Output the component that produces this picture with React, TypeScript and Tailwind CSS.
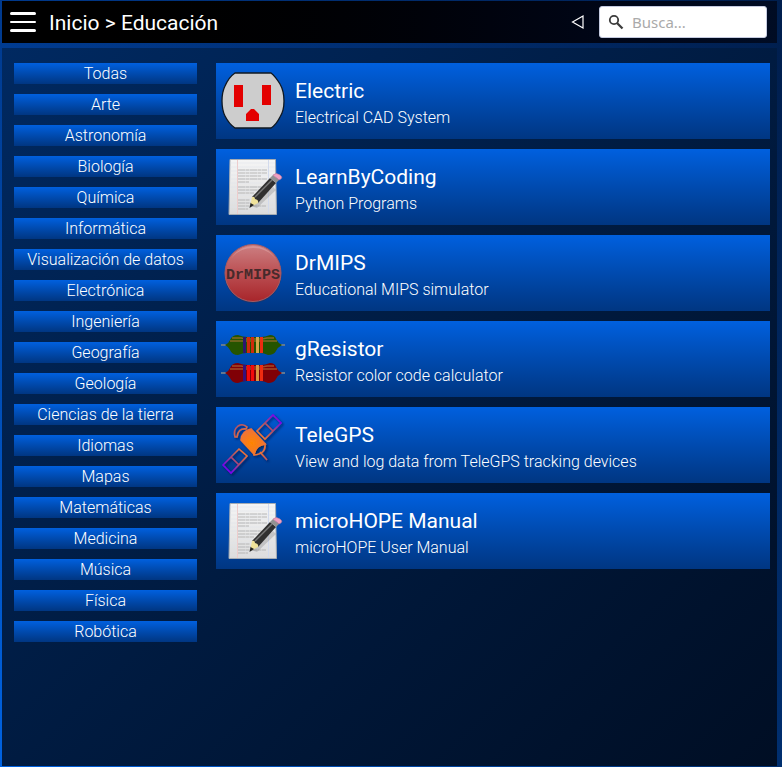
import React from 'react';

const categories = [
  'Todas', 'Arte', 'Astronomía', 'Biología', 'Química', 'Informática',
  'Visualización de datos', 'Electrónica', 'Ingeniería', 'Geografía',
  'Geología', 'Ciencias de la tierra', 'Idiomas', 'Mapas', 'Matemáticas',
  'Medicina', 'Música', 'Física', 'Robótica',
];

function OutletIcon() {
  return (
    <svg viewBox="0 0 64 64" className="size-16" aria-hidden="true">
      <path d="M14 4H50Q54 7 59 15Q63 22 63 32T59 48Q55 56 50 59H14Q8 55 4 47Q1 41 1 32T4 17Q8 8 14 4Z" fill="#cdcdcd" stroke="#101820" strokeWidth="1.300" />
      <path d="M13 16h9v22h-9zM41 16h9v20h-9zM25 52V45l5-5h3l5 5v7z" fill="#e30000" />
    </svg>
  );
}

function DocumentIcon({ id }: { id: string }) {
  return (
    <svg viewBox="1 1 64 64" className="size-16" aria-hidden="true">
      <defs>
        <linearGradient id={id} x1="0" y1="0" x2="0" y2="1">
          <stop offset="0" stopColor="#f5f5f5" />
          <stop offset="1" stopColor="#dcdcdc" />
        </linearGradient>
      </defs>
      <path d="M10 5.500H55.500L56.500 60.500H9Z" fill={`url(#${id})`} stroke="#a5acb4" />
      <path d="M10 9H55M10 13H55M10 17H55M10 21H55M10 25H55M10 29H55M10 33H55M10 37H55M10 41H55M10 45H55M10 49H55M10 53H55M10 57H55" stroke="#dce1eb" strokeWidth=".500" />
      <path d="M17.500 6V60" stroke="#edcccc" />
      <path d="M48.500 6V60" stroke="#d2daec" />
      <path d="M18 16H47M18 19H47M18 22H41M18 25H47M18 28H29M18 33H42M18 36H40M18 39H34M18 46H30M18 49H34M18 52H46M18 55H28" stroke="#b5b5b5" strokeWidth="1.200" strokeDasharray="7 .5 4 .5" />
      <path d="M31 52L53 33L56 36L37 54Z" fill="#777" opacity=".3" />
      <path d="M32 43L50 24L56 29L38 49Z" fill="#303030" />
      <path d="M35 43L52 26" stroke="#777" strokeWidth="1.500" />
      <path d="M50 24L53 21L59 26L56 29Z" fill="#929292" />
      <path d="M53 21Q56 18 60 21T59 26Z" fill="#efa0c2" stroke="#bd7899" strokeWidth=".600" />
      <path d="M32 43Q35 42 35 45Q39 46 38 49L30 53Z" fill="#efe29a" />
      <path d="M30.500 49L34 51L29.500 54Z" fill="#222" />
    </svg>
  );
}

function MipsIcon() {
  return (
    <svg viewBox="0 0 64 64" className="size-16" aria-hidden="true">
      <defs>
        <linearGradient id="mips" x1="0" y1="0" x2="0" y2="1">
          <stop offset="0" stopColor="#cc8083" />
          <stop offset=".450" stopColor="#bd5457" />
          <stop offset="1" stopColor="#a8252a" />
        </linearGradient>
      </defs>
      <ellipse cx="32" cy="33" rx="28.500" ry="29" fill="#30344f" opacity=".5" />
      <ellipse cx="32" cy="32" rx="28" ry="28.500" fill="url(#mips)" stroke="#a85b62" />
      <path d="M10 18Q18 5 32 5T55 18Q46 7 32 7T10 18Z" fill="#e0a9aa" opacity=".5" />
      <text x="32" y="38" textAnchor="middle" fontFamily="Liberation Mono, monospace" fontSize="15" fontWeight="700" fill="#472a2b">DrMIPS</text>
    </svg>
  );
}

function Resistor({ y, body, bands }: { y: number; body: string; bands: string[] }) {
  return (
    <g transform={`translate(0 ${y})`}>
      <path d="M0 10H64" stroke="#617994" strokeWidth="2" />
      <path d="M4 10Q8 8 9 5Q11 0 17 0Q22 2 26 2H40Q44 2 49 0Q54 0 55 4Q57 8 61 10Q57 12 55 16Q53 20 47 20Q43 18 39 18H25Q22 18 17 20Q11 20 9 15Q8 12 4 10Z" fill={body} />
      <path d="M11 3H20L25 4H41L46 3H53M9 6H56" fill="none" stroke="#b77738" strokeWidth="1.500" opacity=".65" />
      <path d="M23.500 2V18" stroke={bands[0]} strokeWidth="3" />
      <path d="M27.500 2V18M31.500 2V18" stroke={bands[1]} strokeWidth="3" />
      <path d="M36.500 2V18" stroke={bands[2]} strokeWidth="3" />
      <path d="M40.500 2V18" stroke="#f02c10" strokeWidth="3" />
    </g>
  );
}

function ResistorIcon() {
  return (
    <svg viewBox="0 0 64 64" className="size-16" aria-hidden="true">
      <Resistor y={8} body="#255400" bands={['#2b176f', '#cf2b0c', '#d3a849']} />
      <Resistor y={36} body="#800006" bands={['#35107b', '#f40b0b', '#dc953f']} />
    </svg>
  );
}

function SatelliteIcon() {
  return (
    <svg viewBox="0 0 64 64" className="size-16" aria-hidden="true">
      <defs>
        <radialGradient id="satellite" gradientUnits="userSpaceOnUse" cx="31" cy="30" r="36">
          <stop offset="0" stopColor="#ff8500" />
          <stop offset=".350" stopColor="#ef7336" />
          <stop offset=".650" stopColor="#b65165" />
          <stop offset="1" stopColor="#7a00ed" />
        </radialGradient>
        <filter id="satelliteShadow" x="-20%" y="-20%" width="150%" height="150%">
          <feDropShadow dx="1.500" dy="1.500" stdDeviation="1" floodColor="#001333" floodOpacity=".65" />
        </filter>
      </defs>
      <g filter="url(#satelliteShadow)" fill="none" stroke="url(#satellite)" strokeWidth="1.600">
        <path d="M36 18L52 2L60 10L44 26ZM44 10L52 18M2 52L18 36L26 43L10 60ZM10 44L18 52" />
        <path d="M20 27Q21 18 30 16L44 31Q35 32 33 41Z" fill="url(#satellite)" />
        <path d="M14 24Q12 17 17 13Q22 10 26 14L25 16Q17 15 16 24Z" />
        <path d="M33 41Q35 32 44 31Q45 41 33 42ZM39 39L46 47" />
      </g>
    </svg>
  );
}

const programs = [
  { name: 'Electric', description: 'Electrical CAD System', icon: <OutletIcon /> },
  { name: 'LearnByCoding', description: 'Python Programs', icon: <DocumentIcon id="codingPaper" /> },
  { name: 'DrMIPS', description: 'Educational MIPS simulator', icon: <MipsIcon /> },
  { name: 'gResistor', description: 'Resistor color code calculator', icon: <ResistorIcon /> },
  { name: 'TeleGPS', description: 'View and log data from TeleGPS tracking devices', icon: <SatelliteIcon /> },
  { name: 'microHOPE Manual', description: 'microHOPE User Manual', icon: <DocumentIcon id="manualPaper" /> },
];

export default function App() {
  return (
    <div className="flex min-h-screen flex-col gap-[5px] bg-[linear-gradient(to_right,transparent,rgba(0,12,35,0.6)),linear-gradient(to_bottom,#00398c,#0062e0)] pt-px pr-[5px] pb-px pl-[2px] font-['Roboto',sans-serif] text-white">
      <header className="flex h-[42px] items-center bg-linear-to-r from-black to-[#000c24] pr-[10px] pl-2">
        <button type="button" aria-label="Menú" className="flex w-[26px] flex-col gap-[6px]">
          <span className="h-[3px] w-full rounded-sm bg-white" />
          <span className="h-[2px] w-full rounded-sm bg-white" />
          <span className="h-[3px] w-full rounded-sm bg-white" />
        </button>
        <nav aria-label="Ruta" className="ml-[13px] flex-1 pt-0.5 text-[21px] leading-6">
          <a href="#inicio">Inicio</a> &gt; <a href="#educacion">Educación</a>
        </nav>
        <button type="button" aria-label="Atrás" className="mr-[14px]">
          <svg viewBox="0 0 14 16" className="h-4 w-3.5" aria-hidden="true">
            <path d="M1.500 8L12 2V14Z" fill="none" stroke="white" strokeWidth="1.200" />
          </svg>
        </button>
        <label className="flex h-8 w-[168px] items-center rounded-[3px] border border-[#c5cbe0] bg-white pl-2">
          <svg viewBox="0 0 16 16" className="mr-2 size-4 shrink-0" fill="none" stroke="#3c3c3c" aria-hidden="true">
            <circle cx="6" cy="6" r="4.200" strokeWidth="1.800" />
            <path d="M9 9L14.500 14.500" strokeWidth="2.300" />
          </svg>
          <input type="search" aria-label="Busca" placeholder="Busca..." className="min-w-0 flex-1 bg-transparent font-['Noto_Sans',sans-serif] text-[15px] text-gray-800 outline-none placeholder:text-[#aaaaaa]" />
        </label>
      </header>
      <main className="flex flex-1 items-start gap-[19px] bg-linear-to-br from-[#002961] to-[#000e24] pt-[15px] pr-[7px] pb-4 pl-3">
        <nav aria-label="Categorías" className="flex w-[183px] shrink-0 flex-col gap-[10px]">
          {categories.map((name) => (
            <button key={name} type="button" className="h-[21px] bg-linear-to-b from-[#0060df] to-[#003682] pt-px text-center text-base leading-5 font-light">
              {name}
            </button>
          ))}
        </nav>
        <ul className="flex min-w-0 flex-1 flex-col gap-[10px]">
          {programs.map(({ name, description, icon }) => (
            <li key={name}>
              <a href={`#${name}`} className="flex h-[76px] items-center gap-[10px] bg-linear-to-b from-[#0060df] to-[#003682] pl-[5px]">
                {icon}
                <div className="pt-1.5">
                  <h2 className="text-[21px] leading-7">{name}</h2>
                  <p className="text-base leading-[26px] font-light">{description}</p>
                </div>
              </a>
            </li>
          ))}
        </ul>
      </main>
    </div>
  );
}
